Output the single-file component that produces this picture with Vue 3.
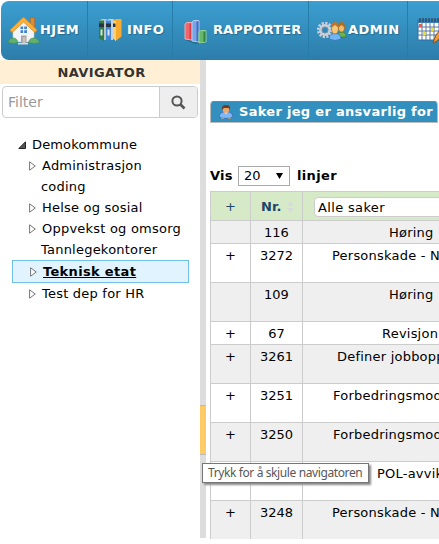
<script setup>
const tree = [
  { label: 'Administrasjon', arrow: true },
  { label: 'coding' },
  { label: 'Helse og sosial', arrow: true },
  { label: 'Oppvekst og omsorg', arrow: true },
  { label: 'Tannlegekontorer' },
  { label: 'Teknisk etat', arrow: true, selected: true },
  { label: 'Test dep for HR', arrow: true },
]
const rows = [
  { nr: '116', text: 'Høring', indent: 86, short: true },
  { plus: true, nr: '3272', text: 'Personskade - N', indent: 29 },
  { nr: '109', text: 'Høring', indent: 86 },
  { plus: true, nr: '67', text: 'Revisjon', indent: 79, short: true },
  { plus: true, nr: '3261', text: 'Definer jobbopp', indent: 34 },
  { plus: true, nr: '3251', text: 'Forbedringsmod', indent: 30 },
  { plus: true, nr: '3250', text: 'Forbedringsmod', indent: 30 },
  { nr: '', text: 'POL-avvik', indent: 74 },
  { plus: true, nr: '3248', text: 'Personskade - N', indent: 29 },
]
</script>

<template>
  <div class="page">
    <nav class="menu">
      <a class="item home">
        <svg width="32" height="32" viewBox="0 0 32 32">
          <path d="M22.500 4h4v9h-4z" fill="#e08a30" stroke="#b5651b" stroke-width=".5" />
          <path d="M5 15 15.500 6 26 15v13H5z" fill="#f3f4f8" stroke="#c5cad4" stroke-width=".6" />
          <path d="M2 16 14.500 4q1-.8 2 0L29 16l-2 2.500L15.500 8 4 18.500z" fill="#fbb03a" stroke="#d58a20" stroke-width=".8" />
          <path d="M12.500 12.500h6.500v6.500h-6.500z" fill="#3f82d8" />
          <path d="M15.700 12v7M12 15.700h7.500" stroke="#fff" />
          <path d="M13 21.500h5.500V29H13z" fill="#a3a0a0" />
          <path d="M14.500 23h3v6h-3z" fill="#c5c0ba" />
          <path d="M.5 28.500q-.5-4 4.500-4.500 4 0 5 4.500-4 2-9.500 0zM20.500 28.500q1-4.500 5-4.500 5 0 6 4.500-5 2-11 0z" fill="#62b070" stroke="#3f8f55" stroke-width=".6" />
          <path d="M10 29h10v1.500H10z" fill="#d9dadd" />
        </svg>
        <span>HJEM</span>
      </a>
      <a class="item info">
        <svg width="26" height="28" viewBox="0 0 26 28">
          <path d="M2 4.500 5 3h5l-1 2v19H5z" fill="#b9c4c4" />
          <path d="M2 4.500h5V25l-5-2.500z" fill="#2f7d45" />
          <path d="m9 4.500 3-1.500h5l-1 2v19h-4z" fill="#c3d3e6" />
          <path d="M9 4.500h5V25l-5-2.500z" fill="#4385d6" />
          <path d="M16 4.500 19 3h5.500v17.500L18.500 25z" fill="#f9ab30" />
          <path d="m16 4.500 3 .5v20l-3-2.500z" fill="#ffd070" />
          <path d="M2 7.500h5v3.500H2zM9 7.500h5v3.500H9zM16 7.500h2.500v3.500H16z" fill="#27333d" />
          <path d="M3.500 13.500h2v6h-2zM10.500 13.500h2v6h-2z" fill="#fff" opacity=".8" />
        </svg>
        <span>INFO</span>
      </a>
      <a class="item reports">
        <svg width="24" height="26" viewBox="0 0 24 26">
          <path d="m1 21 10 4 11-1v-3z" fill="#174861" opacity=".4" />
          <path d="m1 5 2-1.500h5V21l-7-1z" fill="#f0676b" stroke="#f5a9ac" />
          <path d="M5.500 5v15l2 .5V4z" fill="#d83e45" />
          <path d="m8 3 2-1.500h5V23l-7-1z" fill="#7ba4e6" stroke="#b0cbf3" />
          <path d="M12.500 3.500V22l2 .5v-21z" fill="#3e6fc2" />
          <path d="m15 13 2-1.500h5V23l-7 1z" fill="#66b968" stroke="#92d393" />
          <path d="M19.500 13v10l2-.5V12z" fill="#338343" />
        </svg>
        <span>RAPPORTER</span>
      </a>
      <a class="item admin">
        <svg width="30" height="26" viewBox="0 0 30 26">
          <circle cx="8" cy="12" r="6.800" fill="none" stroke="#c9ced8" stroke-width="2.800" stroke-dasharray="2.200 1.360" />
          <circle cx="8" cy="12" r="4.600" fill="none" stroke="#c9ced8" stroke-width="2.600" />
          <circle cx="8" cy="12" r="3" fill="#3689b6" stroke="#8291a3" stroke-width=".8" />
          <path d="M20 19q0-5 5-5 4 0 4 5z" fill="#6fb548" stroke="#377a2c" stroke-width=".7" />
          <ellipse cx="24.500" cy="9.500" rx="3" ry="4.500" fill="#efbd6a" stroke="#9f6421" stroke-width=".7" />
          <path d="M21 10q0-6 3.500-6t3.500 6l-3.500-3z" fill="#b46b20" />
          <path d="M12 21q0-5.500 6-5.500t6 5.500q-6 3-12 0z" fill="#72b5f4" stroke="#2c6ab4" stroke-width=".7" />
          <ellipse cx="18" cy="10.500" rx="3.500" ry="5.500" fill="#f2c779" stroke="#a66a25" stroke-width=".7" />
          <path d="M14 10q0-6 4-6t4 6l-4-3z" fill="#bd7528" />
        </svg>
        <span>ADMIN</span>
      </a>
      <a class="item calendar">
        <svg width="26" height="28" viewBox="0 0 26 28">
          <path d="M1 3h21v20H1z" fill="#fff" stroke="#316da2" />
          <path d="M1 3h21v3H1z" fill="#387eb5" />
          <path d="M3 1v4M6 1v4M9 1v4M12 1v4M15 1v4M18 1v4M21 1v4" stroke="#273744" />
          <path d="M1 10h21M1 14h21M1 18h21M5 6v17M9 6v17M13 6v17M17 6v17" stroke="#5a779a" />
          <path d="M2 7h3v3H2z" fill="#ef5350" />
          <path d="M14 11h3v3h-3zM6 15h3v3H6z" fill="#e7df34" />
          <path d="m17 23 2-5 7-9v8l-6 7-4 2z" fill="#f29b35" stroke="#84501e" />
        </svg>
      </a>
    </nav>

    <div class="body">
      <aside class="navigator">
        <h2>NAVIGATOR</h2>
        <div class="filter">
          <span class="placeholder">Filter</span>
          <span class="search">
            <svg width="15" height="15" viewBox="0 0 15 15">
              <circle cx="6" cy="6" r="4.600" fill="none" stroke="#555" stroke-width="2" />
              <path d="m9.500 9.500 4 4" stroke="#555" stroke-width="2.600" />
            </svg>
          </span>
        </div>
        <div class="root">
          <svg width="8" height="8" viewBox="0 0 8 8"><path d="M7.500.8v6.700H.8z" fill="#555" stroke="#222" /></svg>
          <span>Demokommune</span>
        </div>
        <ul>
          <li v-for="node in tree" :key="node.label" :class="{ selected: node.selected, leaf: !node.arrow }">
            <svg v-if="node.arrow" width="7" height="10" viewBox="0 0 7 10"><path d="M.6.800v8.400L6.300 5z" fill="#fff" stroke="#777" /></svg>
            <span>{{ node.label }}</span>
          </li>
        </ul>
      </aside>

      <div class="sash"><div class="grip"></div></div>

      <main>
        <div class="tab">
          <svg width="14" height="14" viewBox="0 0 14 14">
            <path d="M0 12q0-4 4-5h6q4 1 4 5-7 3-14 0z" fill="#7fb8f8" stroke="#2f62ad" stroke-width=".7" />
            <path d="m5 7 2 2 2-2z" fill="#fff" />
            <ellipse cx="7" cy="4.500" rx="3.300" ry="3.500" fill="#e9aa72" />
            <path d="M3 5q-1-5 4-5t4 5L9.500 3H5z" fill="#713d22" />
            <path d="M2 13h3M9 13h3" stroke="#e9aa72" />
          </svg>
          <span>Saker jeg er ansvarlig for</span>
        </div>
        <div class="length">
          <b class="vis">Vis</b>
          <span class="select"><span>20</span><svg width="7" height="6" viewBox="0 0 7 6"><path d="M0 0h7L3.500 6z" fill="#000" /></svg></span>
          <b class="lines">linjer</b>
        </div>
        <div class="table">
          <div class="row head">
            <div class="plus">+</div>
            <div class="nr"><span>Nr.</span><svg width="7" height="12" viewBox="0 0 7 12"><path d="M0 5h7L3.500 0zM0 7h7l-3.500 5z" fill="#d5dcdb" /></svg></div>
            <div class="desc"><span class="choice">Alle saker</span></div>
          </div>
          <div v-for="(row, i) in rows" :key="i" class="row" :class="{ short: row.short }">
            <div class="plus">{{ row.plus ? '+' : '' }}</div>
            <div class="nr">{{ row.nr }}</div>
            <div class="desc" :style="{ paddingLeft: row.indent + 'px' }">{{ row.text }}</div>
          </div>
        </div>
      </main>
    </div>
    <div class="tooltip">Trykk for å skjule navigatoren</div>
  </div>
</template>

<style>
body { margin: 0; background: #fff; overflow: hidden; }
</style>
<style scoped>
* { box-sizing: border-box; }
.page { position: relative; width: 439px; height: 544px; overflow: hidden; font: 13px/22px "DejaVu Sans", sans-serif; color: #000; white-space: nowrap; }
svg { display: block; flex: none; }
.menu { display: flex; height: 59px; margin: 1px 0 0 1px; border-radius: 8px 0 0 8px; background: linear-gradient(#3b9fd1, #2c7da9); overflow: hidden; }
.item { display: flex; flex: none; align-items: center; border-right: 1px solid #277da9; color: #fff; font-weight: bold; font-size: 13px; letter-spacing: .4px; text-shadow: 1px 1px 1px #276b8e; }
.item span { padding-bottom: 1px; }
.home { width: 87px; padding-left: 7px; }
.home svg { margin-bottom: 2px; }
.info { width: 85px; padding-left: 9px; gap: 4px; }
.info svg { margin-bottom: 2px; }
.reports { width: 136px; padding-left: 11px; gap: 5px; letter-spacing: .1px; }
.reports svg { margin-top: 2px; }
.admin { width: 99px; padding-left: 8px; gap: 1px; }
.calendar { width: 50px; padding-left: 9px; }
.body { display: flex; height: 478px; }
.navigator { width: 200px; flex: none; }
h2 { height: 24px; margin: 0; padding-left: 3px; background: #fff0d5; color: #333; font-size: 13px; line-height: 25px; letter-spacing: .4px; text-align: center; }
.filter { display: flex; width: 196px; height: 32px; margin: 2px 0 0 2px; border: 1px solid #ccc; border-radius: 4px; overflow: hidden; }
.placeholder { width: 156px; padding-left: 5px; color: #999; font-size: 14px; line-height: 31px; }
.search { display: grid; flex: 1; place-items: center; border-left: 1px solid #ccc; background: #eee; }
.root { display: flex; align-items: center; gap: 6px; height: 21px; margin-top: 16px; padding-left: 18px; letter-spacing: .15px; }
ul { list-style: none; margin: 0; padding: 0; letter-spacing: .22px; }
li { display: flex; align-items: center; gap: 6px; height: 21px; margin-left: 12px; padding-left: 17px; }
li.leaf { padding-left: 29px; }
li.selected { width: 177px; height: 23px; padding-left: 17px; border: 1px solid #70c0e7; background: #e1f3ff; font-weight: bold; letter-spacing: .33px; text-decoration: underline; }
.sash { display: flex; align-items: flex-start; width: 6px; flex: none; padding-top: 345px; background: #ddd; }
.grip { width: 6px; height: 50px; border: solid #bbb; border-width: 1px 0; background: #ffcb67; }
main { flex: none; width: 240px; margin-left: 4px; }
.tab { display: flex; align-items: center; gap: 6px; width: 228px; height: 22px; margin-top: 41px; padding-left: 8px; border: 1px solid #bbb; border-top-color: #4196be; border-radius: 4px 4px 0 0; background: #328fbe; color: #fff; font-size: 13px; font-weight: bold; letter-spacing: .3px; }
.length { display: flex; align-items: center; height: 22px; margin-top: 42px; }
.vis { width: 28px; letter-spacing: .2px; }
.select { display: flex; justify-content: space-between; align-items: center; width: 52px; height: 20px; padding: 0 6px 0 5px; border: 1px solid #a9a9a9; }
.lines { margin-left: 7px; letter-spacing: .35px; }
.table { height: 348px; margin-top: 4px; border: solid #ccc; border-width: 1px 0 0 1px; overflow: hidden; }
.row { display: grid; grid-template-columns: 40px 52px 160px; height: 39px; border-bottom: 1px solid #ccc; background: #fff; }
.row.short { height: 23px; }
.row:nth-child(even) { background: #efefef; }
.row > div { border-right: 1px solid #ccc; }
.row:not(.head) > div { line-height: 24px; }
.plus, .nr { text-align: center; }
.desc { letter-spacing: .22px; }
.row.head { height: 29px; background: #d7eac7; color: #1c4769; line-height: 29px; }
.head .nr { display: flex; align-items: center; padding-left: 10px; gap: 6px; font-weight: bold; }
.head .desc { padding: 5px 0 0 11px; }
.choice { display: block; height: 20px; padding-left: 3px; border: 1px solid #ccc; border-radius: 4px; background: #fff; color: #000; line-height: 19px; letter-spacing: .35px; }
.tooltip { position: absolute; left: 202px; top: 463px; width: 167px; height: 20px; padding-left: 5px; border: 1px solid #767676; background: #fff; color: #575757; font: 12px/18px "Noto Sans", sans-serif; letter-spacing: -.39px; box-shadow: 2px 2px 2px #888; }
</style>
